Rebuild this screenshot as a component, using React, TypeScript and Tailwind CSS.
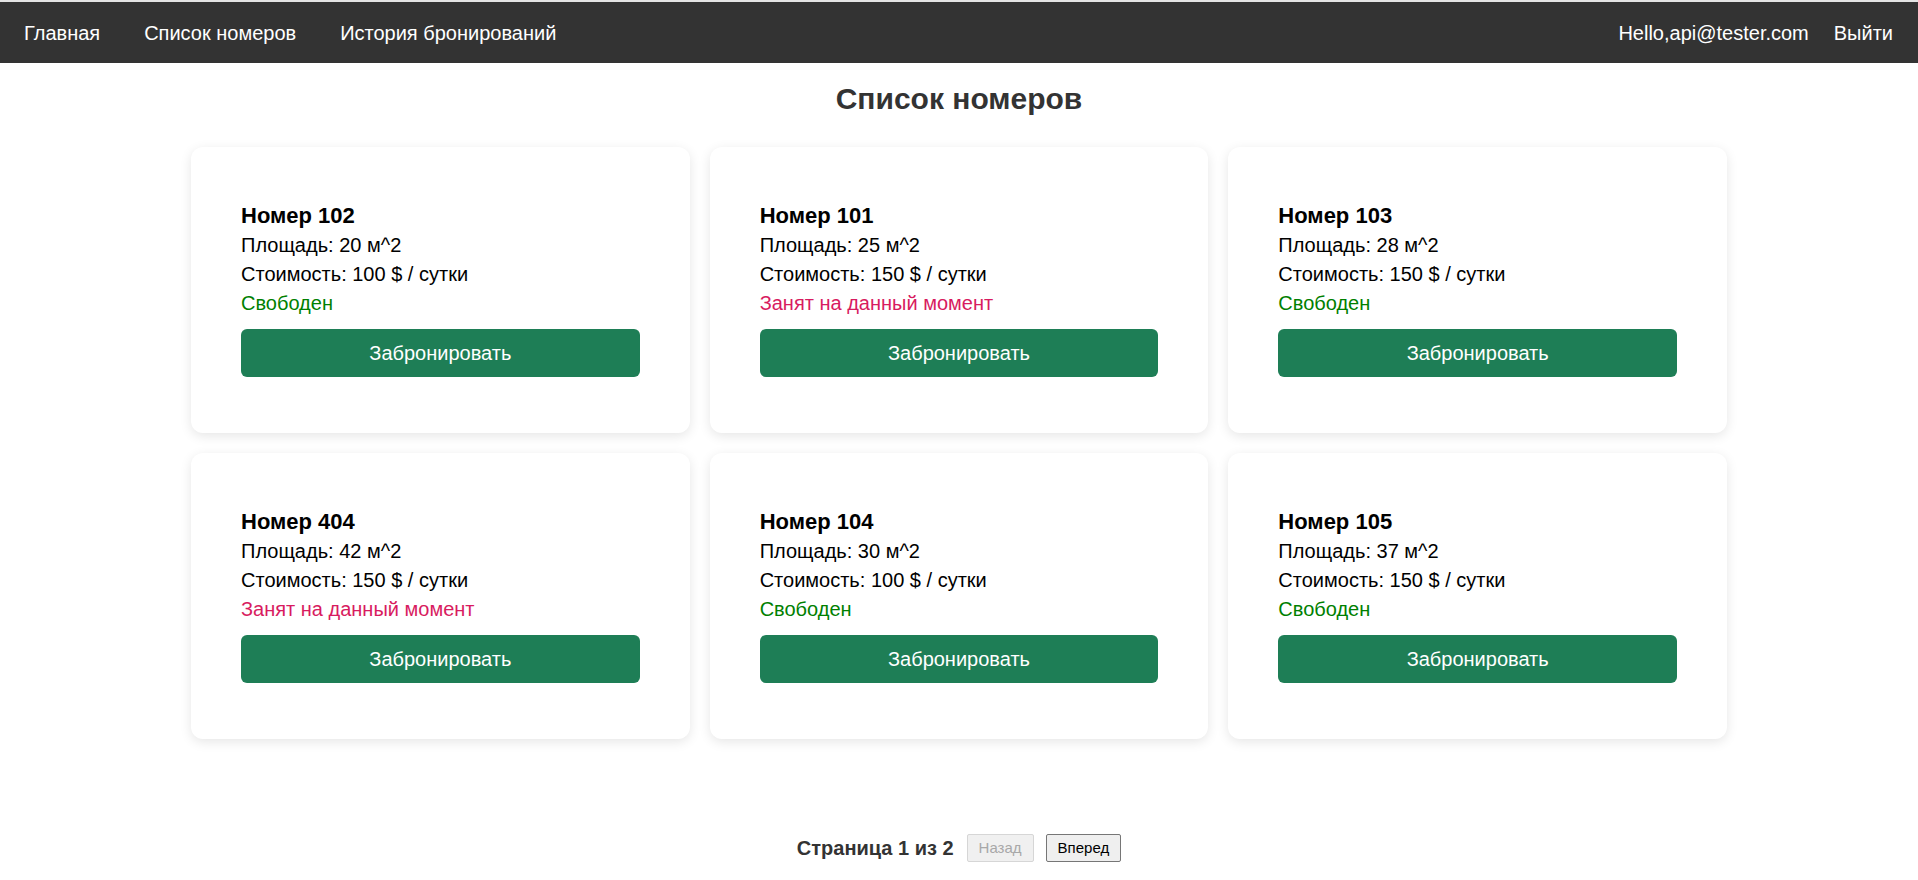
import React from "react";

type Room = { num: string; area: number; price: number; free: boolean };

const rooms: Room[] = [
  { num: "102", area: 20, price: 100, free: true },
  { num: "101", area: 25, price: 150, free: false },
  { num: "103", area: 28, price: 150, free: true },
  { num: "404", area: 42, price: 150, free: false },
  { num: "104", area: 30, price: 100, free: true },
  { num: "105", area: 37, price: 150, free: true },
];

function Card({ r }: { r: Room }) {
  return (
    <div className="bg-white rounded-[12px] shadow-[0_3px_12px_rgba(0,0,0,0.10)] px-[50px] pt-[54px] pb-[56px]">
      <div className="text-[22px] font-bold leading-[30px] text-black">Номер {r.num}</div>
      <div className="leading-[29px] text-black">Площадь: {r.area} м^2</div>
      <div className="leading-[29px] text-black">Стоимость: {r.price} $ / сутки</div>
      {r.free ? (
        <div className="leading-[29px] text-[#008000]">Свободен</div>
      ) : (
        <div className="leading-[29px] text-[#d81b60]">Занят на данный момент</div>
      )}
      <button className="mt-[11px] w-full h-[48px] rounded-[6px] bg-[#1e7e56] text-white text-[20px] flex items-center justify-center">
        Забронировать
      </button>
    </div>
  );
}

export default function App() {
  return (
    <div className="min-h-[880px] bg-white text-[20px]" style={{ fontFamily: '"Liberation Sans", Arial, sans-serif' }}>
      <div className="h-[2px] bg-[#e4e4e4]" />
      <nav className="h-[61px] bg-[#333333] text-white flex items-center justify-between pl-[24px] pr-[25px]">
        <div className="flex items-center gap-[44px]">
          <span>Главная</span>
          <span>Список номеров</span>
          <span>История бронирований</span>
        </div>
        <div className="flex items-center gap-[25px]">
          <span>Hello,api@tester.com</span>
          <span>Выйти</span>
        </div>
      </nav>
      <h1 className="mt-[19px] text-center text-[30px] leading-[34px] font-bold text-[#333333]">Список номеров</h1>
      <div className="mx-auto mt-[31px] w-[1536px] grid grid-cols-3 gap-[20px]">
        {rooms.map((r) => (
          <Card key={r.num} r={r} />
        ))}
      </div>
      <div className="mt-[94px] flex items-center justify-center">
        <span className="font-bold text-[#333333] text-[20px] mr-[13px]">Страница 1 из 2</span>
        <button disabled className="h-[28px] px-[11px] text-[15px] text-[#a8a8a8] bg-[#f0f0f0] border border-[#d6d6d6] rounded-[2px] mr-[12px]">
          Назад
        </button>
        <button className="h-[28px] px-[11px] text-[15px] text-black bg-[#efefef] border border-[#767676] rounded-[2px]">
          Вперед
        </button>
      </div>
    </div>
  );
}
